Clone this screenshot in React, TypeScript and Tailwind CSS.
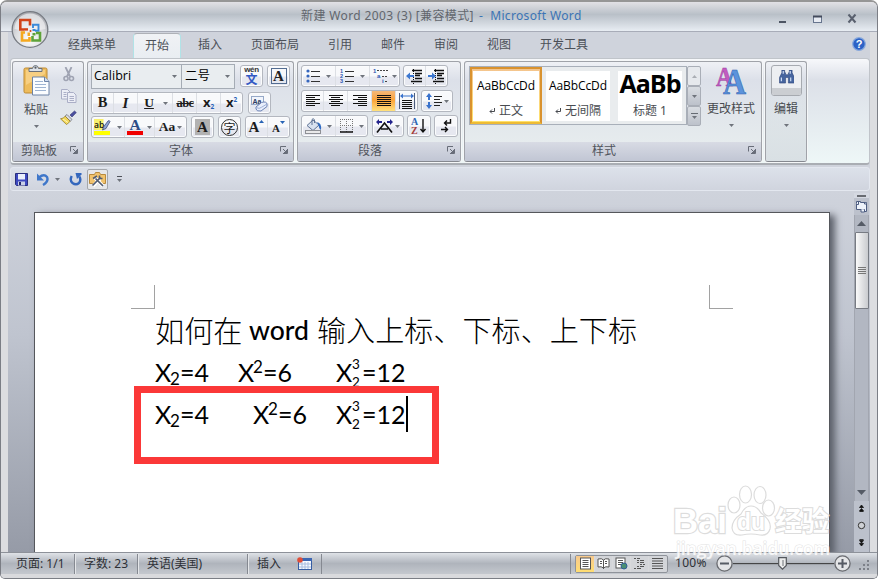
import React from 'react'
import clsx from 'clsx'

type BoxProps = { className?: string; children?: React.ReactNode }

const Arrow: React.FC<{ className?: string }> = ({ className }) => (
  <svg width="5" height="3" viewBox="0 0 5 3" className={clsx('shrink-0', className)}>
    <path d="M0 0h5L2.5 3z" fill="#6f747c" />
  </svg>
)

// Rounded strip that holds one or more tool cells
const Strip: React.FC<BoxProps> = ({ className, children }) => (
  <div
    className={clsx(
      'flex h-[22px] shrink-0 overflow-hidden rounded-[3px] border border-[#b3b7bf] bg-linear-to-b from-[#f8f9fb] from-50% to-[#e6e8f0] to-55% shadow-[inset_0_0_0_1px_#fbfcfd]',
      className
    )}
  >
    {children}
  </div>
)

const Cell: React.FC<BoxProps> = ({ className, children }) => (
  <div className={clsx('flex shrink-0 items-center justify-center border-r border-[#dcdfe4] last:border-r-0', className)}>
    {children}
  </div>
)

const Launcher = () => (
  <svg width="8" height="8" viewBox="0 0 8 8" className="mb-[4px] shrink-0" fill="none" stroke="#686d79">
    <path d="M.5 5.500V.5H6" />
    <path d="M3 3l3 3" />
    <path d="M7.500 3v4.500H3" />
    <path d="M4 6.500h3M6.500 4v3" />
  </svg>
)

const Group: React.FC<BoxProps & { title?: string; titleClass?: string }> = ({ className, title, titleClass, children }) => (
  <section
    className={clsx(
      'flex h-[101px] shrink-0 flex-col overflow-hidden rounded-[3px] border border-[#a0a3a9] border-b-[#85888f] bg-linear-to-b from-[#eff1f5] via-[#dce0e9] via-18% to-[#e9efef] shadow-[0_0_0_1px_#f5f7f8]',
      className
    )}
  >
    <div className="h-[80px] shrink-0">{children}</div>
    {title && (
      <div className="flex h-[19px] items-center bg-linear-to-b from-[#d8dbe4] to-[#c1c6d4] pr-[5px]">
        <span className={clsx('grow pb-px text-[12px] leading-[16px] text-[#50545c]', titleClass)}>{title}</span>
        <Launcher />
      </div>
    )}
  </section>
)

const lineSets = {
  left: [14, 9, 14, 9, 14, 9],
  center: [14, 9, 14, 9, 14, 9],
  right: [14, 9, 14, 9, 14, 9],
  full: [14, 14, 14, 14, 14, 14],
}

const AlignIcon: React.FC<{ kind: keyof typeof lineSets }> = ({ kind }) => (
  <svg width="14" height="12" viewBox="0 0 14 12" fill="#111">
    {lineSets[kind].map((w, i) => (
      <rect key={i} x={kind === 'right' ? 14 - w : kind === 'center' ? Math.floor((14 - w) / 2) : 0} y={i * 2} width={w} height="1" />
    ))}
  </svg>
)

const IndentIcon: React.FC<{ flip?: boolean }> = ({ flip }) => (
  <svg width="17" height="15" viewBox="0 0 17 15">
    <path d="M6 1.500h10M9 4.500h7M9 6.500h5M9 9.500h7M5 12.500h11" stroke="#111" strokeWidth="1.400" />
    <path d="M7.500 0v15" stroke="#111" strokeDasharray="1 1" />
    <path d={flip ? 'M0 6h4V3.500l4 3.500-4 3.500V8H0z' : 'M8 6H4V3.500L0 7l4 3.500V8h4z'} fill="#3d78d0" />
  </svg>
)

const ListIcon: React.FC<{ numbers?: boolean }> = ({ numbers }) => (
  <svg width="15" height="14" viewBox="0 0 15 14">
    {[2, 7, 12].map((y, i) =>
      numbers ? (
        <text key={y} x="0" y={y + 2} fontSize="5.500" fontWeight="bold" fontFamily="Liberation Sans" fill="#2c56b0">
          {i + 1}
        </text>
      ) : (
        <circle key={y} cx="2" cy={y} r="1.600" fill="#3465bd" />
      )
    )}
    <path d="M5 2.500h9M5 7.500h9M5 12.500h9" stroke="#333" />
  </svg>
)

const PasteIcon = () => (
  <svg width="27" height="31" viewBox="0 0 27 31">
    <rect x="1" y="3" width="23" height="25" rx="1.500" fill="#eebc5c" stroke="#bd8a34" />
    <path d="M3 5h19v4L3 20z" fill="#f7cf82" />
    <path d="M6 6.500V3.500h3.500Q10 .5 12.500.5T15.500 3.500H19v3z" fill="#dde2e8" stroke="#6b7078" />
    <circle cx="12.500" cy="2.700" r="1.100" fill="#555a62" />
    <path d="M9.500 12h12l4.500 4.500V30H9.500z" fill="#fbfdff" stroke="#6c83a6" />
    <path d="M21.500 12v4.500H26" fill="#cfdcf0" stroke="#6c83a6" />
    <path d="M12 16.500h8M12 19.500h11M12 22.500h11M12 25.500h11" stroke="#9eb4d2" />
  </svg>
)

const CutIcon = () => (
  <svg width="12" height="15" viewBox="0 0 12 15" fill="none" stroke="#9fa3b2">
    <path d="M2.500 0l4.500 9.500M8.500 0L4 9.500" strokeWidth="1.800" />
    <circle cx="3" cy="11.500" r="2" strokeWidth="1.600" />
    <circle cx="8.500" cy="11.500" r="2" strokeWidth="1.600" />
  </svg>
)

const CopyIcon = () => (
  <svg width="16" height="14" viewBox="0 0 16 14" fill="#eceef6" stroke="#aaaec6">
    <path d="M.5.500h6l2.500 2.500v7H.5z" />
    <path d="M2.500 3.500h3M2.500 5.500h3M2.500 7.500h3" />
    <path d="M6.500 3.500h6l2.500 2.500v7.500H6.500z" />
    <path d="M8.500 7.500h4.500M8.500 9.500h4.500M8.500 11.500h4.500" />
  </svg>
)

const BrushIcon = () => (
  <svg width="17" height="15" viewBox="0 0 17 15">
    <path d="M10 5l4.500-4 1.800 1.600L12 7z" fill="#4a4fa0" stroke="#34366e" strokeWidth=".6" />
    <path d="M7 4.500l5 5-1.700 1.700-5.300-5z" fill="#d9dce4" stroke="#5f636e" strokeWidth=".7" />
    <path d="M5.200 6.200l5 5Q8 13.500 6.500 14.500L.5 8.800Q3.500 8.500 5.200 6.200z" fill="#f2d75a" stroke="#8d7420" strokeWidth=".7" />
    <path d="M3 9l5 3.500" stroke="#fff6b8" />
  </svg>
)

const Highlighter = () => (
  <svg width="17" height="16" viewBox="0 0 17 16">
    <rect width="9.500" height="11" fill="#f7f06e" />
    <text x="0" y="8.500" fontSize="8.500" fontFamily="Open Sans" fontWeight="600" fill="#111">ab</text>
    <path d="M8.500 11l1-3 4.500-6q1.500-1 2 .6L12 9.500z" fill="#8fa6d8" stroke="#3e4b76" strokeWidth=".8" />
    <rect y="12" width="16" height="4" fill="#ff0" />
  </svg>
)

const FontGroup = () => (
  <Group className="ml-[3px] w-[207px]" title="字体" titleClass="pl-[81px]">
    <div className="flex flex-col gap-[3px] pt-[2px] pl-[3px]">
      <div className="flex h-[25px] items-start">
        <div className="flex h-[25px] w-[91px] items-center justify-between border border-[#a5acb5] bg-[#e9edf0] pr-[4px] pl-[2px]">
          <span className="pb-px font-['Open_Sans'] text-[12.5px] text-black">Calibri</span>
          <Arrow />
        </div>
        <div className="-ml-px flex h-[25px] w-[54px] items-center justify-between border border-[#a5acb5] bg-[#e9edf0] pr-[4px] pl-[3px]">
          <span className="pb-px text-[12.5px] text-black">二号</span>
          <Arrow />
        </div>
        <Strip className="mt-px ml-[5px] w-[23px]">
          <Cell className="w-full flex-col">
            <span className="h-[8px] font-['Liberation_Sans'] text-[8px] leading-[8px] font-bold tracking-[-.3px] text-[#333]">wén</span>
            <span className="h-[12px] text-[12px] leading-[12px] font-bold text-[#3159c4]">文</span>
          </Cell>
        </Strip>
        <Strip className="mt-px ml-[4px] w-[23px]">
          <Cell className="w-full">
            <span className="flex h-[16px] w-[16px] items-center justify-center border border-[#526c91] font-['Liberation_Serif'] text-[15px] leading-none font-bold text-[#222]">A</span>
          </Cell>
        </Strip>
      </div>
      <div className="flex gap-[5px] font-['Liberation_Serif'] text-[14.5px] font-bold text-[#1c1c1c]">
        <Strip className="w-[152px]">
          <Cell className="w-[22px]">B</Cell>
          <Cell className="w-[24px] text-[15px] italic">I</Cell>
          <Cell className="w-[35px] gap-[9px] pl-[2px]">
            <span className="text-[13.5px] underline">U</span>
            <Arrow />
          </Cell>
          <Cell className="w-[24px] pl-px text-[12.5px] tracking-[-.5px] line-through">abc</Cell>
          <Cell className="w-[24px] pb-px font-['Open_Sans'] text-[13px]">
            x<span className="mt-[8px] text-[6.5px] text-[#2662b8]">2</span>
          </Cell>
          <Cell className="w-[21px] pb-px font-['Open_Sans'] text-[13px]">
            x<span className="mb-[6px] text-[6.5px] text-[#2662b8]">2</span>
          </Cell>
        </Strip>
        <Strip className="w-[23px]">
          <Cell className="w-full">
            <svg width="17" height="17" viewBox="0 0 17 17">
              <rect x=".5" y="1.500" width="12" height="8" fill="#f1f5fc" stroke="#96a9c8" />
              <text x="1.500" y="8.500" fontSize="7" fontWeight="bold" fontFamily="Liberation Sans" fill="#2b3b62">Aa</text>
              <path d="M5 12l5.500-4.500q5-1.500 5.500 1.500v2.500l-6 4.500q-4.500.6-5-2z" fill="#e8eefb" stroke="#6c83b5" />
              <path d="M5 12.500q3.500 1.800 5.500-.2L16 9" fill="none" stroke="#9eb0d8" />
            </svg>
          </Cell>
        </Strip>
      </div>
      <div className="-mt-px flex font-['Liberation_Serif'] font-bold text-[#1c1c1c]">
        <Strip className="w-[96px]">
          <Cell className="w-[33px] gap-[6px]">
            <Highlighter />
            <Arrow />
          </Cell>
          <Cell className="w-[30px] gap-[4px]">
            <span className="flex h-[16px] w-[16px] items-center justify-center border-b-4 border-[#f00000] text-[15.5px] leading-[12px] text-[#2d4d86]">A</span>
            <Arrow />
          </Cell>
          <Cell className="w-[31px] gap-[2px] text-[13.5px]">
            Aa
            <Arrow />
          </Cell>
        </Strip>
        <Strip className="ml-[4px] w-[23px]">
          <Cell className="w-full">
            <span className="flex h-[16px] w-[15px] items-center justify-center bg-[#b2b2b2] text-[15px]">A</span>
          </Cell>
        </Strip>
        <Strip className="ml-[4px] w-[23px]">
          <Cell className="w-full">
            <span className="flex h-[17px] w-[17px] items-center justify-center rounded-full border border-[#333] font-['Noto_Sans_CJK_SC'] text-[12px] leading-[15px] font-normal">字</span>
          </Cell>
        </Strip>
        <Strip className="ml-[4px] w-[45px]">
          <Cell className="w-[22px] pt-px text-[15px]">
            A
            <svg width="5" height="3" viewBox="0 0 5 3" className="mb-[12px]"><path d="M0 3h5L2.500 0z" fill="#2763b5" /></svg>
          </Cell>
          <Cell className="w-[21px] pt-[3px] text-[11px]">
            A
            <svg width="5" height="3" viewBox="0 0 5 3" className="mb-[13px]"><path d="M0 0h5L2.500 3z" fill="#2763b5" /></svg>
          </Cell>
        </Strip>
      </div>
    </div>
  </Group>
)

const ParagraphGroup = () => (
  <Group className="ml-[3px] w-[164px]" title="段落" titleClass="pl-[60px]">
    <div className="flex flex-col gap-[3px] pt-[3px] pl-[3px]">
      <div className="flex gap-[3px]">
        <Strip className="w-[99px]">
          <Cell className="w-[34px] gap-[5px]"><ListIcon /><Arrow /></Cell>
          <Cell className="w-[34px] gap-[5px]"><ListIcon numbers /><Arrow /></Cell>
          <Cell className="w-[29px] gap-[2px]">
            <svg width="17" height="16" viewBox="0 0 17 16" fontFamily="Liberation Sans" fontWeight="bold" fontSize="6" fill="#2c56b0">
              <text x="0" y="5">1</text>
              <text x="4" y="10">a</text>
              <text x="9" y="15">i</text>
              <path d="M4 2.500h11M9 8.500h6M12 13.500h3" stroke="#444" strokeDasharray="2 1" />
            </svg>
            <Arrow />
          </Cell>
        </Strip>
        <Strip className="w-[45px]">
          <Cell className="w-[22px]"><IndentIcon /></Cell>
          <Cell className="w-[21px]"><IndentIcon flip /></Cell>
        </Strip>
      </div>
      <div className="flex gap-[3px]">
        <Strip className="w-[117px]">
          <Cell className="w-[22px]"><AlignIcon kind="left" /></Cell>
          <Cell className="w-[24px]"><AlignIcon kind="center" /></Cell>
          <Cell className="w-[24px]"><AlignIcon kind="right" /></Cell>
          <Cell className="w-[24px] bg-linear-to-b from-[#f4b877] via-[#fba336] via-45% to-[#ffe17d]"><AlignIcon kind="full" /></Cell>
          <Cell className="w-[21px]">
            <svg width="16" height="16" viewBox="0 0 16 16">
              <path d="M.5 0v16M15.500 0v16" stroke="#4c5d7c" />
              <path d="M1 3l3-2.500v2h8v-2L15 3l-3 2.500v-2H4v2z" fill="#3972cc" />
              <path d="M3 7.500h10M3 9.500h10M3 11.500h10M3 13.500h10M3 15.500h10" stroke="#111" />
            </svg>
          </Cell>
        </Strip>
        <Strip className="w-[32px]">
          <Cell className="w-full gap-[2px]">
            <svg width="16" height="16" viewBox="0 0 16 16">
              <path d="M3 0l3 4H4v3H2V4H0zM3 16l3-4H4V9H2v3H0z" fill="#3972cc" />
              <path d="M8 3.500h8M8 6.500h6M8 9.500h8M8 12.500h6" stroke="#222" />
            </svg>
            <Arrow />
          </Cell>
        </Strip>
      </div>
      <div className="flex gap-[3px]">
        <Strip className="w-[67px]">
          <Cell className="w-[34px] gap-[5px]">
            <svg width="17" height="16" viewBox="0 0 17 16">
              <path d="M2 7.500L8 2l6 5-6 5.500z" fill="#d8e2f0" stroke="#5f7394" />
              <path d="M7 7V1.500Q8.500-.5 9.500 2v3" fill="none" stroke="#5f7394" />
              <path d="M12 4q5 1 4 8-2-1-2.500-5z" fill="#2f6bc2" />
              <rect x=".5" y="12.500" width="15" height="3" fill="#e9e9ea" stroke="#8e9095" />
            </svg>
            <Arrow />
          </Cell>
          <Cell className="w-[31px] gap-[6px]">
            <svg width="13" height="14" viewBox="0 0 13 14" fill="none">
              <path d="M0 .5h13M0 6.500h13M.5 0v13M6.500 0v13M12.500 0v13" stroke="#777" strokeDasharray="1 1" />
              <path d="M0 13h13" stroke="#111" strokeWidth="1.500" />
            </svg>
            <Arrow />
          </Cell>
        </Strip>
        <Strip className="ml-px w-[32px]">
          <Cell className="w-full gap-[2px]">
            <svg width="17" height="15" viewBox="0 0 17 15">
              <path d="M1 13.500L8.500 4 16 13.500M5 10h7" fill="none" stroke="#111" strokeWidth="1.700" />
              <path d="M0 3l3-3v2h3v2H3v2zM17 3l-3-3v2h-3v2h3v2z" fill="#23238c" />
            </svg>
            <Arrow />
          </Cell>
        </Strip>
        <Strip className="w-[24px]">
          <Cell className="w-full">
            <svg width="16" height="18" viewBox="0 0 16 18" fontFamily="Liberation Serif" fontWeight="bold" fontSize="10">
              <text x="0" y="8" fill="#2f66b3">A</text>
              <text x="0" y="16.500" fill="#a43c3c">Z</text>
              <path d="M12 2v12M9.500 12l2.500 3 2.500-3" fill="none" stroke="#111" strokeWidth="1.400" />
            </svg>
          </Cell>
        </Strip>
        <Strip className="w-[24px]">
          <Cell className="w-full">
            <svg width="13" height="14" viewBox="0 0 13 14" fill="none" stroke="#111" strokeWidth="1.400">
              <path d="M10.500 0v4H5M7 1.500L4.500 4 7 6.500M1 10.500h6M5 8l2.500 2.500L5 13" />
            </svg>
          </Cell>
        </Strip>
      </div>
    </div>
  </Group>
)

const GalleryItem: React.FC<BoxProps & { label: string; mark?: boolean }> = ({ className, label, mark, children }) => (
  <div className={clsx('flex h-[50px] w-[64px] shrink-0 flex-col items-center bg-white text-black', className)}>
    <div className="flex h-[32px] items-center whitespace-nowrap">{children}</div>
    <span className="flex items-center gap-[4px] text-[12px] leading-[16px] whitespace-nowrap text-[#484b50]">
      {mark && (
        <svg width="6" height="6" viewBox="0 0 6 6" fill="none" stroke="#484b50">
          <path d="M5.500 0v3.500H1M3 1.500l-2 2 2 2" />
        </svg>
      )}
      {label}
    </span>
  </div>
)

const ScrollButton: React.FC<BoxProps> = ({ className, children }) => (
  <div className={clsx('flex h-[20px] w-[14px] items-center justify-center rounded-[2px] border border-[#a9aeb7]', className)}>{children}</div>
)

const StylesGroup = () => (
  <Group className="ml-[3px] w-[298px]" title="样式" titleClass="pl-[127px]">
    <div className="flex pt-[4px] pl-[4px]">
      <div className="flex h-[59px] w-[218px] items-center border border-[#a8afb9] bg-[#e9ecee]">
        <div className="flex h-[57px] w-[72px] shrink-0 items-center justify-center border-2 border-[#d9922f] border-b-[#eebb35] bg-linear-to-b from-[#f4c58d] to-[#ffe169]">
          <GalleryItem className="w-[66px]" label="正文" mark>
            <span className="pb-[2px] font-['Open_Sans'] text-[12px] tracking-[-.1px]">AaBbCcDd</span>
          </GalleryItem>
        </div>
        <GalleryItem className="ml-[4px]" label="无间隔" mark>
          <span className="pb-[2px] font-['Open_Sans'] text-[12px] tracking-[-.1px]">AaBbCcDd</span>
        </GalleryItem>
        <GalleryItem className="ml-[8px]" label="标题 1">
          <span className="pb-[8px] font-['Open_Sans'] text-[25px] leading-[30px] font-bold tracking-[-1px]">AaBb</span>
        </GalleryItem>
      </div>
      <div className="flex w-[14px] flex-col">
        <ScrollButton className="bg-[#e6e9ed]"><Arrow className="rotate-180 opacity-50" /></ScrollButton>
        <ScrollButton className="bg-linear-to-b from-[#d9dde2] to-[#bdc2cb]"><Arrow /></ScrollButton>
        <ScrollButton className="flex-col gap-[2px] bg-linear-to-b from-[#d9dde2] to-[#bdc2cb]">
          <div className="h-px w-[7px] bg-[#666b73]" />
          <Arrow />
        </ScrollButton>
      </div>
      <div className="flex w-[60px] flex-col items-center">
        <svg width="30" height="30" viewBox="0 0 30 30" fontFamily="Liberation Serif" fontWeight="bold" className="overflow-visible">
          <text x="0" y="20" fontSize="28" textLength="17" lengthAdjust="spacingAndGlyphs" fill="#c25bc0" stroke="#9a3c9d" strokeWidth=".5">A</text>
          <text x="7" y="28" fontSize="36" textLength="23" lengthAdjust="spacingAndGlyphs" fill="#5b93dc" stroke="#2f62ae" strokeWidth=".6">A</text>
        </svg>
        <span className="mt-[4px] text-[12px] leading-[18px] text-[#484b50]">更改样式</span>
        <Arrow className="mt-[6px]" />
      </div>
    </div>
  </Group>
)

const Orb = () => (
  <svg width="38" height="38" viewBox="0 0 38 38" className="absolute top-[9px] left-[10px]">
    <defs>
      <radialGradient id="orb" cx=".5" cy=".75" r=".7">
        <stop offset="0" stopColor="#fff" />
        <stop offset=".6" stopColor="#d9dadd" />
        <stop offset="1" stopColor="#aaacb2" />
      </radialGradient>
    </defs>
    <circle cx="19" cy="18.500" r="17.800" fill="url(#orb)" stroke="#777b82" strokeWidth="1.300" />
    <path d="M3.500 18a15.500 15.500 0 0 1 31 0q-15 3-31 0z" fill="#f2f3f5" opacity=".65" />
    <g fill="none" strokeWidth="2.600">
      <path d="M13 18.500H9.300v-9.500h9.700V14.500" stroke="#d2441a" />
      <path d="M22 17v-3.200h5.500v6H24" stroke="#3b8ad9" strokeWidth="1.900" />
      <path d="M14 21.500H11v8H18.500V26" stroke="#f5a81e" />
      <path d="M25 22h4v7.500h-7.500V25" stroke="#5ea339" />
    </g>
    <g>
      <rect x="13" y="17.200" width="4" height="2.400" fill="#d2441a" />
      <rect x="16.500" y="21.500" width="2.500" height="3.500" fill="#f5a81e" />
      <rect x="21.500" y="18" width="3" height="2" fill="#3b8ad9" />
      <rect x="21.500" y="22" width="3" height="2.500" fill="#5ea339" />
      <circle cx="19.500" cy="20" r="1" fill="#d2441a" />
    </g>
  </svg>
)

const TitleBar = () => (
  <header className="flex h-[31px] items-center border-b border-[#a8acb8] bg-linear-to-b from-[#e5e4e8] via-[#b9c0c8] via-45% to-[#e8edf3] pl-[300px] font-['Noto_Sans','Noto_Sans_CJK_SC',sans-serif] text-[12px]">
    <span className="w-[178px] tracking-[.38px] whitespace-nowrap text-[#62666d]">新建 Word 2003 (3) [兼容模式]</span>
    <span className="grow tracking-[.35px] whitespace-nowrap text-[#3b74b5]">-&nbsp; Microsoft Word</span>
    <svg width="82" height="12" viewBox="0 0 82 12" className="mt-[5px] mr-[18px]">
      <path d="M2 9h7" stroke="#4d5563" strokeWidth="2" />
      <rect x="36.500" y="3.500" width="8" height="6" fill="#e7ebf2" stroke="#67758e" />
      <path d="M36 3.500h9" stroke="#434b5c" strokeWidth="2" />
      <path d="M71.500 1.500l7 8M78.500 1.500l-7 8" stroke="#59606e" strokeWidth="2" />
    </svg>
  </header>
)

const tabs = [
  { name: '经典菜单', width: 'w-[64px]' },
  { name: '开始', width: 'w-[48px]' },
  { name: '插入', width: 'w-[60px]' },
  { name: '页面布局', width: 'w-[70px]' },
  { name: '引用', width: 'w-[60px]' },
  { name: '邮件', width: 'w-[46px]' },
  { name: '审阅', width: 'w-[60px]' },
  { name: '视图', width: 'w-[46px]' },
  { name: '开发工具', width: 'w-[84px]' },
]

const TabRow = () => (
  <nav className="flex h-[27px] items-end pl-[46px] text-[12px] text-[#4c5058]">
    {tabs.map((tab) => (
      <div
        key={tab.name}
        className={clsx(
          'flex h-[26px] shrink-0 items-center justify-center pb-[2px] whitespace-nowrap',
          tab.width,
          tab.name === '开始' && 'mr-[-1px] ml-[9px] rounded-t-[4px] border border-b-0 border-[#b1e3e7] border-t-[#aeb1b7] bg-linear-to-b from-[#f0f2f5] to-[#e9edf2]'
        )}
      >
        {tab.name}
      </div>
    ))}
    <svg width="14" height="14" viewBox="0 0 14 14" className="mr-[4px] mb-[8px] ml-auto">
      <circle cx="7" cy="7" r="6.300" fill="#2c62c6" stroke="#89a9dc" strokeWidth="1.200" />
      <text x="7" y="11" textAnchor="middle" fontSize="11" fontWeight="bold" fontFamily="Liberation Sans" fill="#fff">?</text>
    </svg>
  </nav>
)

const Ribbon = () => (
  <div className="flex h-[107px] w-[860px] items-start rounded-[4px] border border-[#c0c4ca] border-b-2 border-b-[#a9adb3] bg-linear-to-b from-[#f7f8fb] via-[#dce0e8] via-20% to-[#eef7f7] pt-[2px] pl-px">
    <Group className="w-[72px]" title="剪贴板" titleClass="pl-[8px]">
      <div className="flex pt-[3px] pl-[8px]">
        <div className="flex w-[30px] flex-col items-center">
          <PasteIcon />
          <span className="mt-[5px] text-[12px] leading-[18px] whitespace-nowrap text-[#484b50]">粘贴</span>
          <Arrow className="mt-[6px]" />
        </div>
        <div className="flex flex-col items-center gap-[7px] pt-[2px] pl-[9px]">
          <CutIcon />
          <CopyIcon />
          <BrushIcon />
        </div>
      </div>
    </Group>
    <FontGroup />
    <ParagraphGroup />
    <StylesGroup />
    <Group className="ml-[3px] w-[42px]">
      <div className="flex h-[99px] flex-col items-center bg-linear-to-b from-transparent to-[#d9e0e4] pt-[3px]">
        <div className="flex h-[31px] w-[31px] shrink-0 flex-col justify-between overflow-hidden rounded-[3px] border border-[#a6aab0] bg-[#edeff2]">
          <svg width="15" height="14" viewBox="0 0 16 15" className="mt-[4px] ml-[7px]">
            <path d="M3 0h3v3h1v2h3V3h1V0h3v3l2.500 5v6H10V8H7v6H.5V8L3 3z" fill="#46659f" stroke="#2a4176" strokeWidth=".6" />
            <path d="M2.500 8v4M12.500 8v4M4.500 1v3M12 1v3" stroke="#cddcf5" strokeWidth="1.300" />
          </svg>
          <div className="h-[7px] bg-[#cbced2]" />
        </div>
        <span className="mt-[4px] text-[12px] leading-[18px] text-[#484b50]">编辑</span>
        <Arrow className="mt-[6px]" />
      </div>
    </Group>
  </div>
)

const QuickAccess = () => (
  <div className="mt-[2px] flex h-[24px] w-[860px] items-center rounded-[3px] border border-[#e3e7ef] bg-linear-to-b from-[#dce1ea] to-[#d0d4de] pl-[4px]">
    <svg width="13" height="13" viewBox="0 0 13 13">
      <path d="M.5.500h12v12h-11l-1-1z" fill="#3d49c0" stroke="#2a2f7e" />
      <rect x="3" y="1" width="7" height="5.500" fill="#e9eefb" />
      <rect x="3" y="8.500" width="7" height="4" fill="#c9d0e6" />
      <rect x="4" y="9" width="2" height="3" fill="#23286b" />
    </svg>
    <svg width="13" height="13" viewBox="0 0 13 13" className="ml-[9px]" fill="none">
      <path d="M2 4.500q5-4 8 -.5 2 4.500-4 8" stroke="#3f77ca" strokeWidth="2.400" />
      <path d="M0 .5v7h7z" fill="#3f77ca" />
    </svg>
    <Arrow className="ml-[5px]" />
    <svg width="13" height="13" viewBox="0 0 13 13" className="ml-[9px]" fill="none">
      <path d="M2.700 3Q.5 7.500 3.500 10q3.500 2.500 6.500 0 2.500-3 .3-6.500" stroke="#3467bd" strokeWidth="2.400" />
      <path d="M6.500 0h6v1.500L8 6z" fill="#3467bd" />
    </svg>
    <div className="ml-[5px] flex h-[21px] w-[21px] items-center justify-center rounded-[2px] border border-[#a4a7ac] bg-[#e6e7e9]">
      <svg width="17" height="17" viewBox="0 0 17 17">
        <path d="M.5 3.500h5l1-2h4l1 2h5v9H.5z" fill="#f1c36d" stroke="#b98a3c" />
        <path d="M4 15l7-7M6 7l8 8" stroke="#fff" strokeWidth="3.600" />
        <path d="M3.500 14.500l8-8M6.500 7.500l7.500 7.500" stroke="#525c70" strokeWidth="1.700" />
        <path d="M4 7.500L8 5M10.500 4.500v3h3" fill="none" stroke="#525c70" strokeWidth="1.600" />
      </svg>
    </div>
    <div className="ml-[9px] flex flex-col items-center gap-[2px]">
      <div className="h-px w-[5px] bg-[#4e525a]" />
      <Arrow />
    </div>
  </div>
)

// An X with both a superscript and a subscript
const StackedX = () => (
  <>
    <span className="w-[16px]">X</span>
    <span className="flex w-[10px] flex-col pt-[4px] text-[13.5px] leading-[18px]">
      <span>3</span>
      <span>2</span>
    </span>
    <span>=12</span>
  </>
)

const Equations: React.FC<{ second: string; third: string }> = ({ second, third }) => (
  <div className="flex h-[42px] text-[25px] leading-[42px] whitespace-nowrap">
    <span className="w-[15px]">X</span>
    <span className="w-[10px] pt-[11px] text-[17px] leading-[34px]">2</span>
    <span className="w-[29px]">=4</span>
    <span className={clsx('flex w-[54px]', second)}>
      <span className="w-[15px]">X</span>
      <span className="w-[10px] text-[17px] leading-[31px]">2</span>
      <span>=6</span>
    </span>
    <span className={clsx('flex', third)}>
      <StackedX />
    </span>
  </div>
)

const Page = () => (
  <div className="relative mt-[21px] h-[341px] w-[796px] shrink-0 overflow-visible border border-b-0 border-[#55575c] bg-white pt-[72px] pl-[96px] font-['Lato','Noto_Sans_CJK_SC',sans-serif] text-black shadow-[5px_3px_7px_#5c606a]">
    <div className="flex h-[24px] justify-between pr-[96px]">
      <div className="h-[24px] w-[24px] border-r border-b border-[#a2a2a2]" />
      <div className="h-[24px] w-[24px] border-b border-l border-[#a2a2a2]" />
    </div>
    <div className="pl-[24px]">
      <div className="flex h-[42px] leading-[41px] whitespace-nowrap">
        <span className="w-[94px] font-['Noto_Sans_CJK_SC'] text-[29.2px] font-light">如何在</span>
        <span className="w-[68px] pt-px text-[26.5px] font-medium">word</span>
        <span className="font-['Noto_Sans_CJK_SC'] text-[29.1px] font-light">输入上标、下标、上下标</span>
      </div>
      <Equations second="ml-[29px]" third="ml-[44px]" />
      <Equations second="ml-[44px]" third="ml-[29px]" />
    </div>
    <div className="absolute top-[183px] left-[371px] h-[36px] w-[2px] bg-black" />
    <div className="absolute top-[173px] left-[99px] h-[78px] w-[305px] border-[7px] border-[#fb3838]" />
  </div>
)

const ScrollBar = () => (
  <div className="ml-auto flex h-[361px] w-[15px] shrink-0 flex-col items-center bg-[#bcc1cc]">
    <div className="flex h-[5px] w-full shrink-0 items-center justify-center bg-[#d5d9e2]">
      <div className="h-[2px] w-[9px] bg-[#686b72]" />
    </div>
    <svg width="13" height="17" viewBox="0 0 13 17" className="shrink-0">
      <path d="M1.500 3.500h4v1h6v9h-2v-2h-8z" fill="#eef3fb" stroke="#4d5d81" />
      <path d="M1 6.500h2.500V3M11.500 6h-2v-2M6 11v3h3.500v-2.500" fill="#eef3fb" stroke="#4d5d81" />
    </svg>
    <div className="flex h-[286px] w-full shrink-0 flex-col items-center border-x border-[#a2a6b0] bg-[#b2b7c2]">
      <svg width="9" height="5" viewBox="0 0 9 5" className="mt-[6px] shrink-0"><path d="M0 5h9L4.500 0z" fill="#555b66" /></svg>
      <div className="mt-[6px] flex h-[77px] w-[14px] shrink-0 flex-col items-center justify-center gap-px rounded-[1px] border border-[#777b83] bg-linear-to-r from-[#fafafa] to-[#c9cbcf]">
        <div className="h-px w-[8px] bg-[#777]" />
        <div className="h-px w-[8px] bg-[#777]" />
        <div className="h-px w-[8px] bg-[#777]" />
        <div className="h-px w-[8px] bg-[#777]" />
      </div>
      <svg width="9" height="5" viewBox="0 0 9 5" className="mt-auto mb-[6px] shrink-0"><path d="M0 0h9L4.500 5z" fill="#555b66" /></svg>
    </div>
    <svg width="9" height="44" viewBox="0 0 9 44" className="mt-px shrink-0">
      <path d="M4.500 3L2.500 5.500h4zM4.500 6.500L2.500 9h4zM2.500 9.500h4M2.500 37.500h4M2.500 38.500h4l-2 2.500zM2.500 41.500h4l-2 2.500z" fill="#111" stroke="#111" strokeWidth=".8" />
      <circle cx="4.500" cy="23.500" r="3.200" fill="#cfd1d5" stroke="#333" />
    </svg>
  </div>
)

const ViewButton: React.FC<BoxProps & { active?: boolean }> = ({ active, children }) => (
  <div className={clsx('flex w-[18px] shrink-0 items-center justify-center', active ? 'bg-linear-to-b from-[#f7c98d] to-[#ffde72]' : 'border-l border-[#d8d9dc]')}>
    <svg width="13" height="13" viewBox="0 0 13 13" fill="none" stroke="#555">{children}</svg>
  </div>
)

const ZoomBall: React.FC<{ plus?: boolean }> = ({ plus }) => (
  <svg width="17" height="17" viewBox="0 0 17 17" className="shrink-0">
    <circle cx="8.500" cy="8.500" r="7.600" fill="#e4e5e7" stroke="#696b70" strokeWidth="1.300" />
    <path d="M4 8.500h9" stroke="#565b64" strokeWidth="2" />
    {plus && <path d="M8.500 4v9" stroke="#565b64" strokeWidth="2" />}
  </svg>
)

const StatusBar = () => (
  <footer className="flex h-[22px] shrink-0 items-center border-t border-[#8d9199] bg-linear-to-b from-[#dfe2e7] via-[#afb4bc] via-50% to-[#c4c8ce] text-[12px] text-[#2d3036]">
    <span className="h-[20px] w-[74px] border-r border-[#858991] pl-[15px] leading-[19px] whitespace-nowrap">页面: 1/1</span>
    <span className="h-[20px] w-[63px] border-r border-[#858991] pl-[9px] leading-[19px] whitespace-nowrap shadow-[inset_1px_0_#e4e6e9]">字数: 23</span>
    <span className="h-[20px] w-[110px] border-r border-[#858991] pl-[9px] leading-[19px] whitespace-nowrap shadow-[inset_1px_0_#e4e6e9]">英语(美国)</span>
    <span className="flex h-[20px] w-[74px] items-center gap-[16px] border-r border-[#858991] pb-px pl-[9px] leading-[19px] whitespace-nowrap shadow-[inset_1px_0_#e4e6e9]">
      插入
      <svg width="16" height="13" viewBox="0 0 16 13">
        <rect x="1.500" y="1.500" width="13" height="11" fill="#f7faff" stroke="#365da3" />
        <rect x="2" y="1" width="13" height="3" fill="#3c66b2" />
        <path d="M5 5v7M8 5v7M11 5v7M2 7h12M2 10h12" stroke="#a8bddf" />
        <circle cx="3" cy="3" r="2.800" fill="#e04d37" />
      </svg>
    </span>
    <div className="ml-[248px] h-[20px] w-px bg-[#858991]" />
    <div className="ml-[4px] flex h-[18px] w-[93px] rounded-[2px] border border-[#8f939a] bg-[#d3d5d9]">
      <ViewButton active>
        <rect x="1.500" y="1" width="10" height="11" fill="#fff" />
        <path d="M3.500 3.500h6M3.500 5.500h6M3.500 7.500h6M3.500 9.500h6" />
      </ViewButton>
      <ViewButton>
        <path d="M1 2q4-1 5.500 1Q8 1 12 2v8q-3.500-1-5.500 1Q4.500 9 1 10zM6.500 3v9M3 4.500h2M3 6.500h2M8 4.500h2M8 6.500h2" fill="#fff" />
      </ViewButton>
      <ViewButton>
        <rect x="1" y="1" width="9" height="10" fill="#fff" />
        <path d="M3 3.500h5M3 5.500h5M3 7.500h3" />
        <circle cx="9" cy="9" r="3" fill="#4b8f72" stroke="#345e9a" />
      </ViewButton>
      <ViewButton>
        <path d="M1 1.500h6M4 3.500h7M4 5.500h7M7 7.500h5M4 9.500h7M1 11.500h7" strokeDasharray="2 1 6" />
      </ViewButton>
      <ViewButton>
        <path d="M1 1.500h11M1 4h11M1 6.500h11M1 9h11M1 11.500h11" />
      </ViewButton>
    </div>
    <span className="ml-[7px] w-[41px] pb-px tracking-[.3px]">100%</span>
    <ZoomBall />
    <div className="flex h-[14px] w-[101px] items-center justify-center bg-linear-to-b from-transparent from-45% via-[#333] via-45% to-transparent to-55%">
      <svg width="9" height="13" viewBox="0 0 9 13" className="mr-[2px]">
        <path d="M.7.700h7.600v7.800L4.500 12.200.7 8.500z" fill="#eceded" stroke="#55585e" strokeWidth="1.200" />
        <path d="M5 3v6" stroke="#6d7076" />
      </svg>
    </div>
    <ZoomBall plus />
    <svg width="12" height="12" viewBox="0 0 12 12" className="mt-[5px] ml-[8px]" fill="#7c8088">
      <path d="M8 0h2v2H8zM4 4h2v2H4zM8 4h2v2H8zM0 8h2v2H0zM4 8h2v2H4zM8 8h2v2H8z" />
    </svg>
  </footer>
)

const Watermark = () => (
  <div className="absolute top-[482px] left-[672px] h-[80px] w-[162px] font-['Liberation_Sans','Noto_Sans_CJK_SC',sans-serif]">
    <svg width="162" height="80" viewBox="0 0 162 80" fontWeight="bold" fill="#fff" stroke="#dcdcdc" strokeWidth="1.200">
      <g>
        <ellipse cx="61" cy="21" rx="6" ry="8" />
        <ellipse cx="72.500" cy="10.500" rx="6" ry="8.500" />
        <ellipse cx="87" cy="11" rx="6" ry="8.500" />
        <ellipse cx="95.500" cy="24" rx="6" ry="8" />
        <path d="M78 22q6 0 10 7 11 8 9 16-2 7-10 6-9-2-18 0-9 1-10-7 0-8 9-14 4-8 10-8z" />
      </g>
      <text x="0" y="49" fontSize="35" strokeWidth="2.400" paintOrder="stroke" textLength="54" lengthAdjust="spacingAndGlyphs">Bai</text>
      <text x="64" y="46" fontSize="24" strokeWidth="2" paintOrder="stroke" textLength="28" lengthAdjust="spacingAndGlyphs">du</text>
      <text x="102" y="47" fontSize="27" strokeWidth="2" paintOrder="stroke" textLength="54" lengthAdjust="spacingAndGlyphs">经验</text>
      <text x="3" y="71" fontSize="17.500" fontFamily="Open Sans" fontWeight="600" textLength="154" strokeWidth="1" paintOrder="stroke" lengthAdjust="spacingAndGlyphs" opacity=".8">jingyan.baidu.com</text>
    </svg>
  </div>
)

const App: React.FC = () => {
  return (
    <div className="h-[579px] w-[878px] overflow-hidden bg-white font-['Noto_Sans','Noto_Sans_CJK_SC',sans-serif]">
      <div className="relative flex h-[579px] w-[878px] flex-col overflow-hidden rounded-t-[7px] rounded-b-[5px] border border-t-2 border-[#7b7e85] border-t-[#969696] bg-[#dcdde0]">
        <div className="-mt-px">
          <TitleBar />
        </div>
        <div className="ml-[7px] flex h-[520px] w-[862px] flex-col bg-[#cfd3dc]">
          <div className="flex flex-col pl-[2px]">
            <div className="pl-[4px]"><TabRow /></div>
            <div className="-mt-px"><Ribbon /></div>
            <QuickAccess />
          </div>
          <div className="flex min-h-0 grow overflow-hidden bg-linear-to-b from-[#cfd3dc] via-[#bfc4cf] via-40% to-[#969ba7] pl-[26px]">
            <Page />
            <div className="mt-[2px] ml-auto flex pr-px"><ScrollBar /></div>
          </div>
        </div>
        <StatusBar />
        <div className="h-[5px] shrink-0 bg-[#d9dadd]" />
        <Orb />
        <Watermark />
      </div>
    </div>
  )
}

export default App
